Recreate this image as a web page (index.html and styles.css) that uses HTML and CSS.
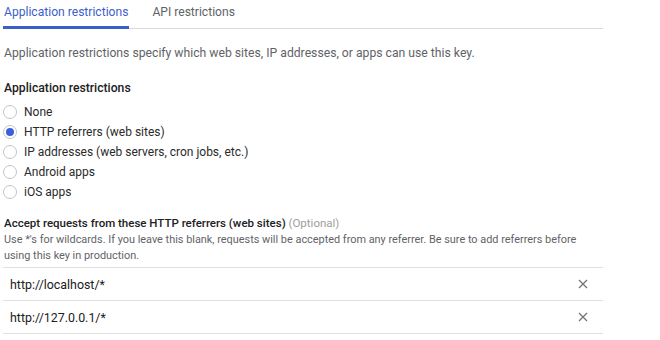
FILE: index.html
```html
<!DOCTYPE html>
<html lang="en">
<head>
  <meta charset="UTF-8">
  <title>Key restrictions</title>
  <link rel="stylesheet" href="styles.css">
</head>
<body>
  <div class="panel">
    <div class="tabs">
      <div class="tab active">Application restrictions</div>
      <div class="tab">API restrictions</div>
    </div>

    <p class="intro">Application restrictions specify which web sites, IP addresses, or apps can use this key.</p>

    <h3>Application restrictions</h3>
    <div class="radios">
      <label class="radio"><span class="dot"></span>None</label>
      <label class="radio checked"><span class="dot"></span>HTTP referrers (web sites)</label>
      <label class="radio"><span class="dot"></span>IP addresses (web servers, cron jobs, etc.)</label>
      <label class="radio"><span class="dot"></span>Android apps</label>
      <label class="radio"><span class="dot"></span>iOS apps</label>
    </div>

    <div class="field-label">Accept requests from these HTTP referrers (web sites) <span class="optional">(Optional)</span></div>
    <p class="hint">Use *'s for wildcards. If you leave this blank, requests will be accepted from any referrer. Be sure to add referrers before using this key in production.</p>

    <div class="referrers">
      <div class="referrer">
        <span>http://localhost/*</span>
        <svg class="remove" width="10" height="10" viewBox="0 0 10 10"><path d="M1 1L9 9M9 1L1 9" stroke="#757575" stroke-width="1.3"/></svg>
      </div>
      <div class="referrer">
        <span>http://127.0.0.1/*</span>
        <svg class="remove" width="10" height="10" viewBox="0 0 10 10"><path d="M1 1L9 9M9 1L1 9" stroke="#757575" stroke-width="1.3"/></svg>
      </div>
    </div>
  </div>
</body>
</html>
```

FILE: styles.css
```css
body {
  margin: 0;
  font-family: Roboto, Arial, sans-serif;
  background: #ffffff;
  color: #212121;
}
.panel {
  width: 600px;
  padding-left: 3px;
}
.tabs {
  display: flex;
  border-bottom: 1px solid #dadada;
  height: 28px;
}
.tab {
  font-size: 12.1px;
  color: #5f6368;
  padding: 4px 1px 0;
  margin-right: 22px;
  line-height: 16px;
}
.tab.active {
  color: #3b5fc9;
  border-bottom: 3px solid #3b5fc9;
  margin-bottom: -1px;
  padding-right: 1px;
}
.intro {
  margin: 16px 0 0 1px;
  font-size: 12.2px;
  line-height: 16px;
  color: #5f6368;
}
h3 {
  margin: 19px 0 0 1px;
  font-size: 12.2px;
  font-weight: 500;
  line-height: 16px;
  color: #212121;
}
.radios {
  margin-top: 6px;
}
.radio {
  display: flex;
  align-items: center;
  height: 20px;
  font-size: 12px;
  color: #2a2a2a;
}
.dot {
  width: 12px;
  height: 12px;
  border: 1px solid #c4c4c4;
  border-radius: 50%;
  margin-right: 7px;
  box-sizing: content-box;
  position: relative;
}
.radio.checked .dot::after {
  content: "";
  position: absolute;
  left: 2px;
  top: 2px;
  width: 8px;
  height: 8px;
  border-radius: 50%;
  background: #3b5fd9;
}
.field-label {
  margin: 14px 0 0 1px;
  font-size: 11.5px;
  font-weight: 500;
  line-height: 14px;
  color: #212121;
}
.optional {
  font-weight: 400;
  color: #9e9e9e;
}
.hint {
  margin: 2px 0 0 1px;
  font-size: 10.9px;
  line-height: 16px;
  color: #5f6368;
}
.referrers {
  margin-top: 3px;
  border-top: 1px solid #e0e0e0;
}
.referrer {
  display: flex;
  justify-content: space-between;
  align-items: center;
  height: 32px;
  border-bottom: 1px solid #e0e0e0;
  padding: 0 15px 0 7px;
  font-size: 12.4px;
  color: #212121;
}
```
